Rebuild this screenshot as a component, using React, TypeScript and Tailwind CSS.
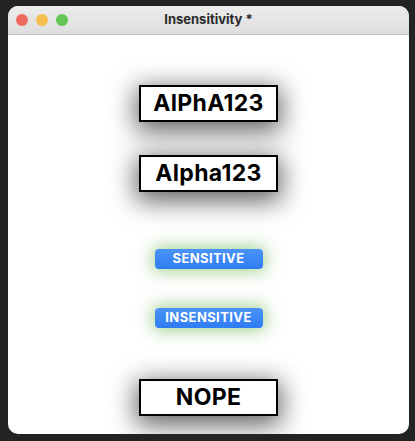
import React from "react"

const LABEL_FONT = { fontFamily: "Inter, 'Liberation Sans', sans-serif" }

function TextBox({ text }: { text: string }) {
  return (
    <div
      className="w-[139px] h-[37px] flex items-center justify-center border-2 border-black bg-white text-[23px] font-bold text-black tracking-[0.3px] shadow-[0_6px_26px_3px_rgba(0,0,0,0.62)]"
      style={LABEL_FONT}
    >
      {text}
    </div>
  )
}

function GlowButton({ label }: { label: string }) {
  return (
    <button
      className="w-[108px] h-[20px] flex items-center justify-center rounded-[4px] bg-gradient-to-b from-[#4a93f7] to-[#2f7cf3] text-white text-[13px] font-bold tracking-[0.4px] shadow-[0_0_16px_3px_rgba(80,170,50,0.5)]"
      style={LABEL_FONT}
    >
      {label}
    </button>
  )
}

export default function App() {
  return (
    <div className="w-[415px] h-[441px] bg-[#232323] pt-[6px] pl-[8px]">
      <div className="w-[401px] h-[428px] rounded-[10px] overflow-hidden bg-white flex flex-col">
        {/* Title bar */}
        <div className="h-[29px] shrink-0 flex items-center relative bg-gradient-to-b from-[#ececec] to-[#dedede] border-b border-[#c4c4c4]">
          <div className="flex gap-[8px] pl-[8px]">
            <span className="w-[12px] h-[12px] rounded-full bg-[#ee6a5f]" />
            <span className="w-[12px] h-[12px] rounded-full bg-[#f5bf4f]" />
            <span className="w-[12px] h-[12px] rounded-full bg-[#62c554]" />
          </div>
          <span
            className="absolute left-0 right-0 text-center text-[13px] font-bold text-[#2a2a2a]"
            style={LABEL_FONT}
          >
            Insensitivity *
          </span>
        </div>

        {/* Content */}
        <div className="flex-1 flex flex-col items-center">
          <div className="mt-[50px]">
            <TextBox text="AlPhA123" />
          </div>
          <div className="mt-[33px]">
            <TextBox text="Alpha123" />
          </div>
          <div className="mt-[57px]">
            <GlowButton label="SENSITIVE" />
          </div>
          <div className="mt-[39px]">
            <GlowButton label="INSENSITIVE" />
          </div>
          <div className="mt-[51px]">
            <TextBox text="NOPE" />
          </div>
        </div>
      </div>
    </div>
  )
}
